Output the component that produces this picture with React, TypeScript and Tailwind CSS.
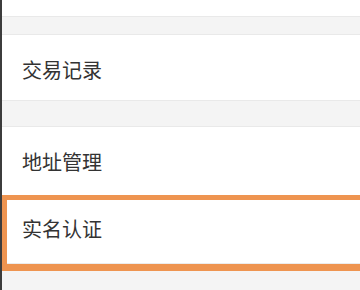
export default function App() {
  return (
    <div
      className="flex w-[360px] h-[290px] overflow-hidden bg-[#f4f4f4]"
      style={{ fontFamily: '"Noto Sans CJK SC", "Noto Sans", sans-serif' }}
    >
      <div className="w-[2px] shrink-0 bg-[#3c3c3c]" />
      <div className="flex flex-1 flex-col">
        <div className="h-[17px] shrink-0 bg-white border-b border-[#e9e9e9]" />
        <div className="h-[17px] shrink-0" />
        <div className="h-[67px] shrink-0 flex items-center pl-[20px] bg-white border-y border-[#e9e9e9]">
          <span className="text-[20px] leading-none text-[#333] pt-[5px]">交易记录</span>
        </div>
        <div className="h-[25px] shrink-0" />
        <div className="h-[69px] shrink-0 flex items-center pl-[20px] bg-white border-t border-[#e9e9e9]">
          <span className="text-[20px] leading-none text-[#333] pt-[2px]">地址管理</span>
        </div>
        <div className="h-[76px] shrink-0 -mr-[10px] border-t-[5px] border-l-[5px] border-b-[7px] border-[#ee9450] bg-white">
          <div className="h-full flex items-center pl-[15px] border-b border-[#ececec]">
            <span className="text-[20px] leading-none text-[#333] pb-[6px]">实名认证</span>
          </div>
        </div>
      </div>
    </div>
  );
}
